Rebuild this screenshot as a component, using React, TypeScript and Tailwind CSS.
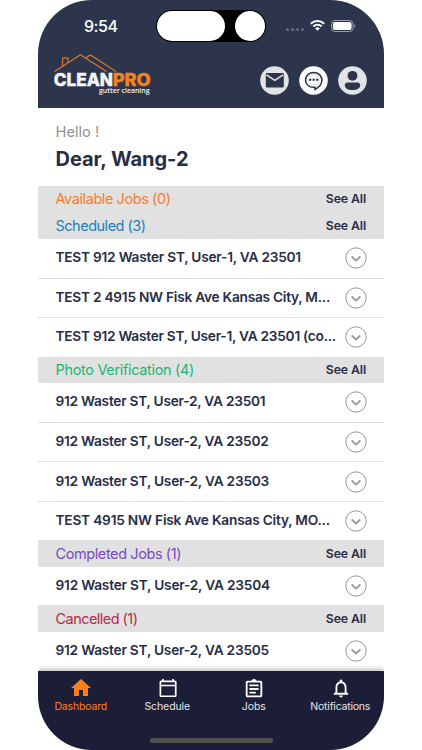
import { clsx } from "clsx";

type Job = { address: string; spacing: string };

type Section = {
	title: string;
	color: string;
	spacing: string;
	jobs: Job[];
};

const sections: Section[] = [
	{ title: "Available Jobs (0)", color: "text-[#f57f29]", spacing: "tracking-[-0.029em]", jobs: [] },
	{
		title: "Scheduled (3)",
		color: "text-[#1d7fb8]",
		spacing: "tracking-[-0.034em]",
		jobs: [
			{ address: "TEST 912 Waster ST, User-1, VA 23501", spacing: "tracking-[-0.017em]" },
			{ address: "TEST 2 4915 NW Fisk Ave Kansas City, M...", spacing: "tracking-[-0.018em]" },
			{ address: "TEST 912 Waster ST, User-1, VA 23501 (co...", spacing: "tracking-[-0.019em]" },
		],
	},
	{
		title: "Photo Verification (4)",
		color: "text-[#22b573]",
		spacing: "tracking-[-0.023em]",
		jobs: [
			{ address: "912 Waster ST, User-2, VA 23501", spacing: "tracking-[-0.018em]" },
			{ address: "912 Waster ST, User-2, VA 23502", spacing: "tracking-[-0.017em]" },
			{ address: "912 Waster ST, User-2, VA 23503", spacing: "tracking-[-0.016em]" },
			{ address: "TEST 4915 NW Fisk Ave Kansas City, MO...", spacing: "tracking-[-0.015em]" },
		],
	},
	{
		title: "Completed Jobs (1)",
		color: "text-[#7749c9]",
		spacing: "tracking-[-0.028em]",
		jobs: [{ address: "912 Waster ST, User-2, VA 23504", spacing: "tracking-[-0.015em]" }],
	},
	{
		title: "Cancelled (1)",
		color: "text-[#be2748]",
		spacing: "tracking-[-0.037em]",
		jobs: [{ address: "912 Waster ST, User-2, VA 23505", spacing: "tracking-[-0.016em]" }],
	},
];

function StatusBar() {
	return (
		<div className="flex h-[52px] items-start">
			<span className="mt-[14px] ml-[46px] w-[72px] text-[16px] leading-6 font-medium tracking-[-0.03em] text-white">9:54</span>
			<div className="mt-[10px] flex h-8 w-[110px] items-center justify-between rounded-full bg-black px-px">
				<div className="h-[30px] w-[68px] rounded-full bg-white" />
				<div className="size-[30px] rounded-full bg-white" />
			</div>
			<div className="mt-[28px] ml-5 flex gap-[2px]">
				{[0, 1, 2, 3].map((dot) => (
					<span key={dot} className="size-[3px] rounded-full bg-[#666c80]" />
				))}
			</div>
			<svg className="mt-[20px] ml-[6px] h-[11px] w-[15px]" viewBox="0 0 15 11" fill="none" stroke="white" strokeWidth="2">
				<path d="M.8 3.8a9.6 9.6 0 0 1 13.4 0" />
				<path d="M3.3 6.5a6 6 0 0 1 8.4 0" />
				<path d="M5.2 8.4a3.3 3.3 0 0 1 4.6 0L7.5 10.8Z" fill="white" stroke="none" />
			</svg>
			<svg className="mt-[20px] ml-[6px] h-[12px] w-[25px]" viewBox="0 0 25 12">
				<rect x=".5" y=".5" width="21.5" height="11" rx="3.4" fill="none" stroke="#979ba8" />
				<rect x="1.9" y="1.9" width="18.7" height="8.2" rx="2" fill="white" />
				<path d="M23.2 4v4c1.5-.7 1.5-3.3 0-4Z" fill="#979ba8" />
			</svg>
		</div>
	);
}

function Logo() {
	return (
		<svg className="h-[44px] w-[100px]" viewBox="0 0 100 44">
			<g fill="none" stroke="#d9772f" strokeWidth="1.2">
				<path d="M.5 19.5 26.5 2.8 52.5 19.5" />
				<path d="M31.5 6 36.5 3 62 19.5" />
				<path d="M8.6 14V6.2h5.3v4.6" />
			</g>
			<g fontFamily="Inter, sans-serif" fontWeight="800" fontSize="17.3" strokeWidth=".4">
				<text x="-.3" y="33.8" fill="#f4f5f8" stroke="#f4f5f8" textLength="59.3" lengthAdjust="spacingAndGlyphs">
					CLEAN
				</text>
				<text x="58.7" y="33.8" fill="#f58220" stroke="#f58220" textLength="38" lengthAdjust="spacingAndGlyphs">
					PRO
				</text>
			</g>
			<text x="45" y="40.5" fontFamily="Open Sans, sans-serif" fontWeight="600" fontSize="7.2" fill="#eef0f4" textLength="50.5" lengthAdjust="spacingAndGlyphs">
				gutter cleaning
			</text>
		</svg>
	);
}

function Header() {
	return (
		<header className="h-[108px] shrink-0 bg-[#2d354d]">
			<StatusBar />
			<div className="flex justify-between pr-[17px] pl-4">
				<Logo />
				<div className="mt-[14px] flex gap-[10px]">
					<svg className="size-[29px]" viewBox="0 0 29 29">
						<circle cx="14.5" cy="14.5" r="14.3" fill="#e2e3e5" />
						<rect x="5.8" y="7" width="18" height="14.5" rx="1" fill="#2d354d" />
						<path d="m6.5 8.8 8.3 5.6 8.3-5.6" fill="none" stroke="#e2e3e5" strokeWidth="1.5" />
					</svg>
					<svg className="size-[29px]" viewBox="0 0 29 29">
						<circle cx="14.5" cy="14.5" r="14.3" fill="white" />
						<path
							d="M14.7 21.3c-4.9 0-8.2-3-8.2-7.3s3.6-7.6 8.2-7.6 8.2 3.3 8.2 7.6c0 4.5-3.2 7.5-6.9 9.5v-2.2Z"
							fill="none"
							stroke="#2d354d"
							strokeWidth="1.5"
						/>
						<ellipse cx="14.7" cy="13.7" rx="6" ry="5.2" fill="none" stroke="#2d354d" strokeWidth=".5" opacity=".35" />
						<g fill="#2d354d">
							<circle cx="11.2" cy="13.7" r="1.2" />
							<circle cx="14.7" cy="13.7" r="1.2" />
							<circle cx="18.2" cy="13.7" r="1.2" />
						</g>
					</svg>
					<svg className="size-[29px]" viewBox="0 0 29 29">
						<circle cx="14.5" cy="14.5" r="14.3" fill="#e2e3e5" />
						<circle cx="14.5" cy="9.8" r="4.9" fill="#2d354d" />
						<path d="M9.5 16.4h10c1.6 0 2.7 1 2.7 2.5 0 3.4-3.3 5.2-7.7 5.2s-7.7-1.8-7.7-5.2c0-1.5 1.1-2.5 2.7-2.5Z" fill="#2d354d" />
					</svg>
				</div>
			</div>
		</header>
	);
}

function JobRow({ job }: { job: Job }) {
	return (
		<li className="flex h-[39.6px] items-center justify-between border-b border-[#e2e2e2] pr-[17px] pl-[17.5px] last:h-[38.5px] last:border-b-0">
			<span className={clsx("-mt-[1.6px] text-[13.7px] font-semibold whitespace-nowrap text-[#272d45]", job.spacing)}>{job.address}</span>
			<svg className="size-[22px] shrink-0" viewBox="0 0 22 22" fill="none" stroke="#999">
				<circle cx="11" cy="11" r="10.2" />
				<path d="m6.6 9.5 4.4 4 4.4-4" strokeWidth="1.7" />
			</svg>
		</li>
	);
}

function JobSection({ section }: { section: Section }) {
	return (
		<section>
			<div className="flex h-[26.5px] items-center justify-between bg-[#e1e1e1] pr-[18px] pl-[17.5px]">
				<h2 className={clsx("text-[14.5px]", section.color, section.spacing)}>{section.title}</h2>
				<button className="mt-[0.6px] text-[12.3px] font-semibold tracking-[-0.01em] text-[#272d45]">See All</button>
			</div>
			<ul>
				{section.jobs.map((job) => (
					<JobRow key={job.address} job={job} />
				))}
			</ul>
		</section>
	);
}

const tabs = [
	{
		label: "Dashboard",
		active: true,
		size: "size-6 -mt-[1.5px] -mb-[0.5px]",
		spacing: "tracking-[-0.015em]",
		icon: <path d="M10 20v-6h4v6h5v-8h3L12 3 2 12h3v8z" />,
	},
	{
		label: "Schedule",
		size: "size-[22px]",
		spacing: "tracking-[-0.01em]",
		icon: <path d="M20 3h-1V1h-2v2H7V1H5v2H4c-1.1 0-2 .9-2 2v16c0 1.1.9 2 2 2h16c1.1 0 2-.9 2-2V5c0-1.1-.9-2-2-2zm0 18H4V10h16v11zm0-13H4V5h16v3z" transform="translate(.9 .1) scale(.93 .9)" />,
	},
	{
		label: "Jobs",
		size: "size-[22px]",
		spacing: "tracking-[-0.01em]",
		icon: <path d="M7 15h7v2H7zm0-4h10v2H7zm0-4h10v2H7zm12-4h-4.18C14.4 1.84 13.3 1 12 1s-2.4.84-2.82 2H5c-1.1 0-2 .9-2 2v14c0 1.1.9 2 2 2h14c1.1 0 2-.9 2-2V5c0-1.1-.9-2-2-2zm0 16H5V5h14v14z" />,
	},
	{
		label: "Notifications",
		size: "size-[22px]",
		spacing: "tracking-[-0.02em]",
		icon: <path d="M12 22c1.1 0 2-.9 2-2h-4c0 1.1.9 2 2 2zm6-6v-5c0-3.07-1.63-5.64-4.5-6.32V4c0-.83-.67-1.5-1.5-1.5s-1.5.67-1.5 1.5v.68C7.64 5.36 6 7.92 6 11v5l-2 2v1h16v-1l-2-2zm-2 1H8v-6c0-2.48 1.51-4.5 4-4.5s4 2.02 4 4.5v6z" transform="translate(0 -.8)" />,
	},
];

function TabBar() {
	return (
		<nav className="relative flex flex-1 flex-col justify-between bg-[#1b1e36] shadow-[0_-2px_5px_rgba(0,0,0,0.25)]">
			<div className="grid grid-cols-4">
				{tabs.map((tab) => (
					<a key={tab.label} className={clsx("flex flex-col items-center pt-[7px]", tab.active ? "text-[#fd7f1c]" : "text-white")}>
						<svg className={tab.size} viewBox="0 0 24 24" fill="currentColor">
							{tab.icon}
						</svg>
						<span className={clsx("-mt-px -ml-px text-[10.5px] leading-4", tab.spacing, !tab.active && "text-[#e4e5ea]")}>{tab.label}</span>
					</a>
				))}
			</div>
			<div className="mb-[7px] h-[5px] w-[123px] self-center rounded-full bg-[#515151]" />
		</nav>
	);
}

export default function App() {
	return (
		<div className="flex h-[750px] justify-center bg-white font-['Inter',sans-serif]">
			<div className="flex h-[750px] w-[346px] flex-col overflow-hidden rounded-[54px] bg-white">
				<Header />
				<div className="h-[78px] shrink-0 pt-[14px] pl-[17.5px]">
					<p className="text-[14.7px] leading-5 text-[#929292]">Hello !</p>
					<h1 className="mt-[3px] text-[20px] leading-7 font-bold tracking-[-0.003em] text-[#272d45]">Dear, Wang-2</h1>
				</div>
				<main className="h-[484.5px] shrink-0 overflow-hidden">
					{sections.map((section) => (
						<JobSection key={section.title} section={section} />
					))}
				</main>
				<TabBar />
			</div>
		</div>
	);
}
